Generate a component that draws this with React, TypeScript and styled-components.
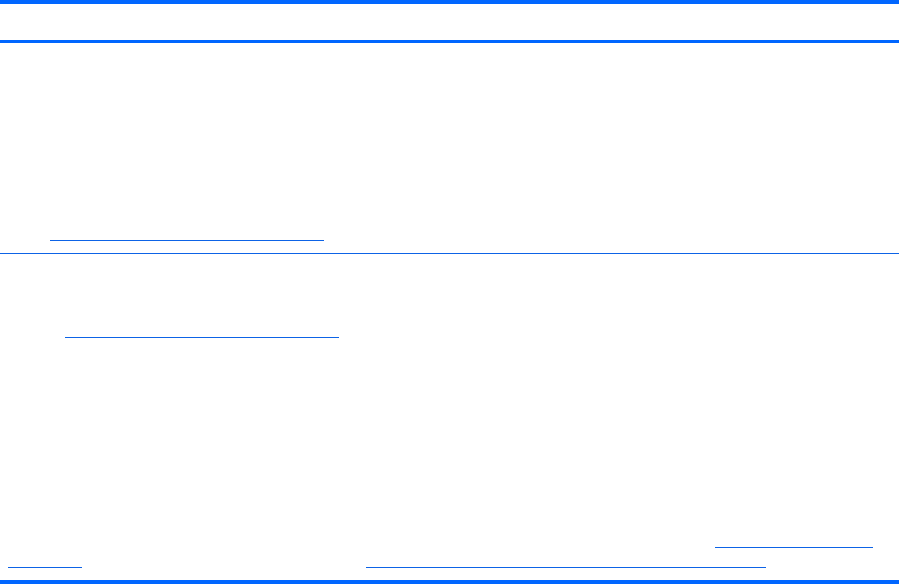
import React from 'react'
import styled, { createGlobalStyle } from 'styled-components'

const GlobalStyle = createGlobalStyle`
  html, body {
    margin: 0;
    padding: 0;
    background: #ffffff;
    font-family: "Liberation Sans", Arial, sans-serif;
  }
`

const BAR = '#0066ff'
const RULE = '#0d63e6'

const Table = styled.div`
  width: 899px;
  display: flex;
  flex-direction: column;
`

const HeaderRow = styled.div`
  height: 36px;
  border-top: 4px solid ${BAR};
  border-bottom: 3px solid ${BAR};
`

const BodyRow = styled.div<{ $height: number; $last?: boolean }>`
  display: grid;
  grid-template-columns: 366px 1fr;
  height: ${props => props.$height}px;
  border-bottom: ${props => (props.$last ? `4px solid ${BAR}` : `1px solid ${RULE}`)};
`

const Cell = styled.div<{ $top?: number; $align?: string }>`
  display: flex;
  flex-direction: column;
  justify-content: ${props => props.$align || 'flex-end'};
  gap: 19px;
  padding-top: ${props => props.$top || 0}px;
  padding-bottom: 12px;
`

// hyperlink underline; the link text itself renders blank in the source
const LinkLine = styled.span<{ $indent: number; $width: number }>`
  display: block;
  height: 1px;
  margin-left: ${props => props.$indent}px;
  width: ${props => props.$width}px;
  background: ${RULE};
`

export default function App() {
  return (
    <>
      <GlobalStyle />
      <Table>
        <HeaderRow />
        <BodyRow $height={210}>
          <Cell>
            <LinkLine $indent={50} $width={274} />
          </Cell>
          <Cell />
        </BodyRow>
        <BodyRow $height={326} $last>
          <Cell $top={83} $align="space-between">
            <LinkLine $indent={65} $width={274} />
            <LinkLine $indent={8} $width={74} />
          </Cell>
          <Cell>
            <LinkLine $indent={349} $width={158} />
            <LinkLine $indent={0} $width={400} />
          </Cell>
        </BodyRow>
      </Table>
    </>
  )
}
